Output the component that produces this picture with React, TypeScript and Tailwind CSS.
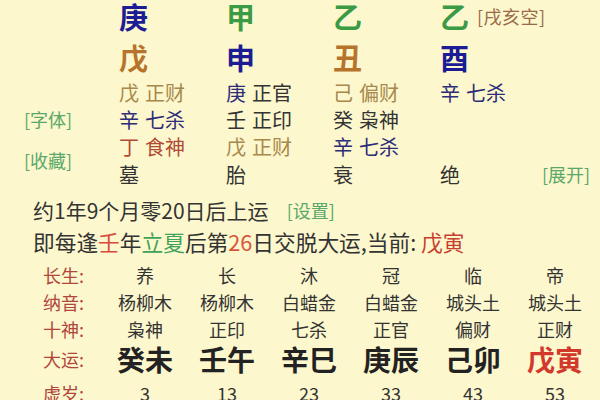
import React from 'react';

const FONT = { fontFamily: '"Noto Sans CJK SC", "Noto Sans", sans-serif' };

const stems = [
  { top: '庚', topC: 'text-[#1c1c94]', bot: '戊', botC: 'text-[#b7732c]' },
  { top: '甲', topC: 'text-[#3b9a44]', bot: '申', botC: 'text-[#1c1c94]' },
  { top: '乙', topC: 'text-[#3b9a44]', bot: '丑', botC: 'text-[#b7732c]' },
  { top: '乙', topC: 'text-[#3b9a44]', bot: '酉', botC: 'text-[#1c1c94]' },
];

// hidden stems, 3 rows x 4 columns
const GOLD = 'text-[#a8884c]';
const NAVY = 'text-[#2c2c78]';
const DARK = 'text-[#333333]';
const RED = 'text-[#b04a34]';

type Cell = { a: string; ac: string; b: string; bc: string } | null;
const hidden: Cell[][] = [
  [
    { a: '戊', ac: GOLD, b: '正财', bc: GOLD },
    { a: '庚', ac: NAVY, b: '正官', bc: DARK },
    { a: '己', ac: GOLD, b: '偏财', bc: GOLD },
    { a: '辛', ac: NAVY, b: '七杀', bc: NAVY },
  ],
  [
    { a: '辛', ac: NAVY, b: '七杀', bc: NAVY },
    { a: '壬', ac: DARK, b: '正印', bc: DARK },
    { a: '癸', ac: DARK, b: '枭神', bc: DARK },
    null,
  ],
  [
    { a: '丁', ac: RED, b: '食神', bc: RED },
    { a: '戊', ac: GOLD, b: '正财', bc: GOLD },
    { a: '辛', ac: NAVY, b: '七杀', bc: NAVY },
    null,
  ],
];

const stages = ['墓', '胎', '衰', '绝'];

const table = [
  { label: '长生:', vals: ['养', '长', '沐', '冠', '临', '帝'] },
  { label: '纳音:', vals: ['杨柳木', '杨柳木', '白蜡金', '白蜡金', '城头土', '城头土'] },
  { label: '十神:', vals: ['枭神', '正印', '七杀', '正官', '偏财', '正财'] },
];
const dayun = ['癸未', '壬午', '辛巳', '庚辰', '己卯', '戊寅'];
const ages = ['3', '13', '23', '33', '43', '53'];

export default function App() {
  return (
    <div className="w-[600px] h-[400px] overflow-hidden bg-[#fcf7cd] text-[#333333]" style={FONT}>
      {/* 四柱 */}
      <div className="flex">
        <div className="w-[119px] shrink-0 pl-[24px] pt-[106px] flex flex-col text-[18px] text-[#5aa86a] leading-[26px]">
          <span>[字体]</span>
          <span className="mt-[15px]">[收藏]</span>
        </div>
        <div className="flex flex-col">
          <div className="flex h-[32px] items-center">
            {stems.map((s, i) => (
              <div key={i} className="w-[107px] flex items-center">
                <span className={`text-[29px] font-bold leading-[32px] ${s.topC}`}>{s.top}</span>
                {i === 3 && (
                  <span className="ml-[8px] text-[18px] leading-[24px] tracking-[0.5px] text-[#9a6a48]">[戌亥空]</span>
                )}
              </div>
            ))}
          </div>
          <div className="flex h-[32px] items-center mt-[10px]">
            {stems.map((s, i) => (
              <div key={i} className="w-[107px]">
                <span className={`text-[29px] font-bold leading-[32px] ${s.botC}`}>{s.bot}</span>
              </div>
            ))}
          </div>
          <div className="flex flex-col mt-[5px] text-[20px] leading-[27px]">
            {hidden.map((row, r) => (
              <div key={r} className="flex h-[27px]">
                {row.map((c, i) => (
                  <div key={i} className="w-[107px] whitespace-nowrap">
                    {c && (
                      <>
                        <span className={c.ac}>{c.a}</span>
                        <span className={`ml-[6px] ${c.bc}`}>{c.b}</span>
                      </>
                    )}
                  </div>
                ))}
              </div>
            ))}
            <div className="flex h-[28px] items-center">
              {stages.map((s, i) => (
                <div key={i} className="w-[107px]">{s}</div>
              ))}
              <span className="ml-[-5px] text-[18px] text-[#5aa86a]">[展开]</span>
            </div>
          </div>
        </div>
      </div>

      {/* 起运 */}
      <div className="pl-[33px] mt-[6px] leading-[32px]">
        <div className="flex items-center text-[21px]">
          <span>约1年9个月零20日后上运</span>
          <span className="ml-[18px] text-[18px] text-[#5aa86a]">[设置]</span>
        </div>
        <div className="text-[21.7px]">
          即每逢<span className="text-[#d84a3c]">壬</span>年<span className="text-[#3ea35a]">立夏</span>后第
          <span className="text-[#d8553c]">26</span>日交脱大运,当前: <span className="text-[#c8402e]">戊寅</span>
        </div>
      </div>

      {/* 大运表 */}
      <div className="mt-[4px] pl-[43px] flex flex-col text-[18px]">
        {table.map((row) => (
          <div key={row.label} className="flex h-[27px] items-center">
            <span className="w-[61px] text-[#b0453c]">{row.label}</span>
            {row.vals.map((v, i) => (
              <span key={i} className="w-[82px] text-center">{v}</span>
            ))}
          </div>
        ))}
        <div className="flex h-[33px] items-center">
          <span className="w-[61px] text-[#b0453c]">大运:</span>
          {dayun.map((v, i) => (
            <span
              key={i}
              className={`w-[82px] text-center text-[28px] font-bold leading-[33px] ${i === 5 ? 'text-[#d2392c]' : 'text-[#222222]'}`}
            >
              {v}
            </span>
          ))}
        </div>
        <div className="flex h-[34px] items-center">
          <span className="w-[61px] text-[#b0453c]">虚岁:</span>
          {ages.map((v, i) => (
            <span key={i} className="w-[82px] text-center">{v}</span>
          ))}
        </div>
      </div>
    </div>
  );
}
